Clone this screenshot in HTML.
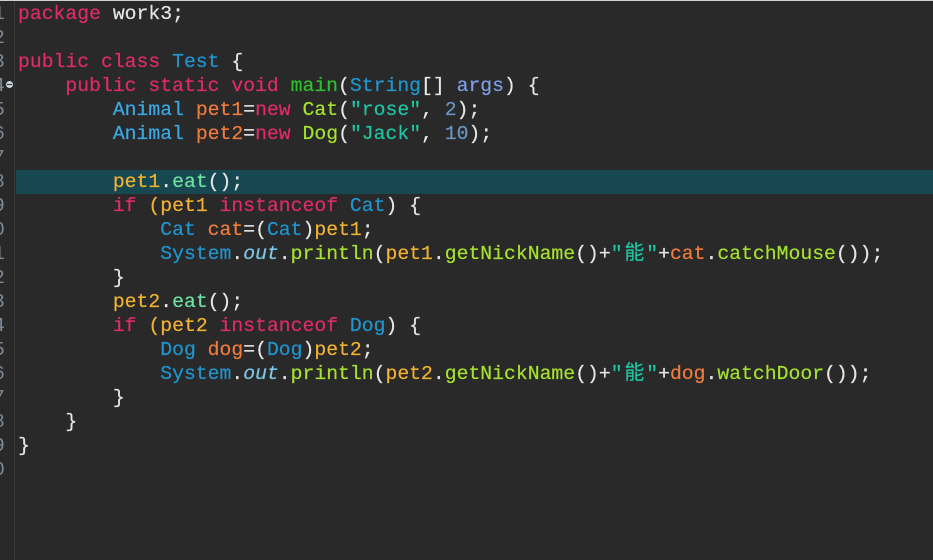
<!DOCTYPE html>
<html><head><meta charset="utf-8"><style>
html,body{margin:0;padding:0;}
body{width:933px;height:560px;background:#292929;overflow:hidden;position:relative;font-family:"Liberation Mono","Noto Sans CJK SC",monospace;font-size:19.75px;}
.top{position:absolute;left:0;top:0;width:933px;height:1px;background:#cfcfcf;}
.gut{position:absolute;left:14px;top:1px;width:1px;height:559px;background:#3a3a3a;}
.hl{position:absolute;left:16px;top:170px;width:917px;height:24px;background:#174851;}
.nums{position:absolute;left:-7px;top:2px;color:#7d8a96;line-height:24px;white-space:pre;}
.code{position:absolute;left:18px;top:2px;line-height:24px;white-space:pre;color:#e6e6e6;-webkit-text-stroke:0.2px currentColor;}
.fold{position:absolute;left:6px;top:81px;width:7px;height:7px;border-radius:50%;background:#c9d3dc;}
.fold:after{content:"";position:absolute;left:1px;top:3px;width:5px;height:1px;background:#333;}
.k{color:#e02a6b}.t{color:#1f96d0}.ta{color:#3aaae6}.v{color:#f07c3c}.m{color:#2cc22c}
.c{color:#a6e22e}.s{color:#1fc6a4}.n{color:#6a97c4}.a{color:#7e9ee8}.p{color:#f2b233}
.f{color:#7ec8ea;font-style:italic}.e{color:#6ee0a0}.g{color:#a6e22e}
.w{display:inline-block;width:23.7px;text-align:center}
</style></head><body>
<div class="top"></div>
<div class="hl"></div>
<div class="gut"></div>
<div class="nums">1
2
3
4
5
6
7
8
9
0
1
2
3
4
5
6
7
8
9
0</div>
<div class="fold"></div>
<div class="code"><span class="k">package</span> work3;

<span class="k">public class</span> <span class="t">Test</span> {
    <span class="k">public static void</span> <span class="m">main</span>(<span class="t">String</span>[] <span class="a">args</span>) {
        <span class="ta">Animal</span> <span class="v">pet1</span>=<span class="k">new</span> <span class="c">Cat</span>(<span class="s">"rose"</span>, <span class="n">2</span>);
        <span class="ta">Animal</span> <span class="v">pet2</span>=<span class="k">new</span> <span class="c">Dog</span>(<span class="s">"Jack"</span>, <span class="n">10</span>);

        <span class="p">pet1</span>.<span class="e">eat</span>();
        <span class="k">if</span> <span class="p">(pet1</span> <span class="k">instanceof</span> <span class="t">Cat</span>) {
            <span class="t">Cat</span> <span class="v">cat</span>=(<span class="t">Cat</span>)<span class="p">pet1</span>;
            <span class="t">System</span>.<span class="f">out</span>.<span class="g">println</span>(<span class="p">pet1</span>.<span class="g">getNickName</span>()+<span class="s">"<span class="w">能</span>"</span>+<span class="v">cat</span>.<span class="g">catchMouse</span>());
        }
        <span class="p">pet2</span>.<span class="e">eat</span>();
        <span class="k">if</span> <span class="p">(pet2</span> <span class="k">instanceof</span> <span class="t">Dog</span>) {
            <span class="t">Dog</span> <span class="v">dog</span>=(<span class="t">Dog</span>)<span class="p">pet2</span>;
            <span class="t">System</span>.<span class="f">out</span>.<span class="g">println</span>(<span class="p">pet2</span>.<span class="g">getNickName</span>()+<span class="s">"<span class="w">能</span>"</span>+<span class="v">dog</span>.<span class="g">watchDoor</span>());
        }
    }
}
</div>
</body></html>
